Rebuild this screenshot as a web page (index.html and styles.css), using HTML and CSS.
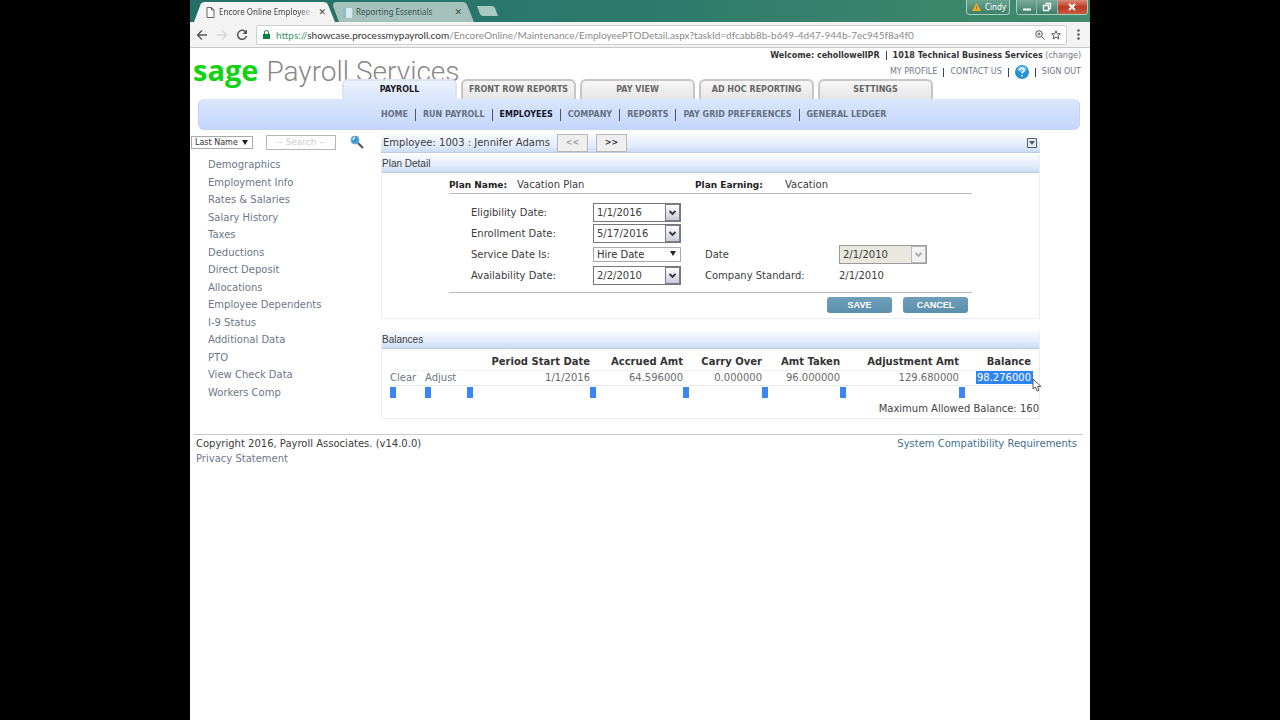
FILE: index.html
```html
<!DOCTYPE html>
<html lang="en">
<head>
<meta charset="utf-8">
<title>Encore Online Employee</title>
<link rel="stylesheet" href="styles.css">
</head>
<body>
<div class="window">
  <div class="titlebar">
    <div class="browser-tab current">
      <svg class="tab-shape" viewBox="0 0 144 20" preserveAspectRatio="none"><path d="M0 20 L6 4 Q7 0 11 0 H130 Q134 0 135 3 L142 20Z" fill="#f3f3f3"/></svg>
      <svg class="file-icon" width="9" height="11" viewBox="0 0 9 11"><path d="M1 .5h4.500L8 3v7.500H1zM5.500 .5V3H8" fill="#fff" stroke="#666"/></svg>
      <span class="tab-title fade">Encore Online Employee</span>
      <button class="tab-close" aria-label="Close tab">✕</button>
    </div>
    <div class="browser-tab">
      <svg class="tab-shape" viewBox="0 0 144 20" preserveAspectRatio="none"><path d="M6 20 L0 4 Q0 0 3 0 H130 Q134 0 135 3 L142 20Z" fill="#a5c1bb"/></svg>
      <svg class="file-icon" width="9" height="11" viewBox="0 0 9 11"><path d="M0 1h9v10H0z" fill="#d7e8ec"/><path d="M0 1h3v10H0z" fill="#8dbccb"/></svg>
      <span class="tab-title">Reporting Essentials</span>
      <button class="tab-close" aria-label="Close tab">✕</button>
    </div>
    <button class="new-tab" aria-label="New tab"><svg width="22" height="12" viewBox="0 0 22 12"><path d="M1 1h15q2 0 3 2l3 8H7q-2 0-3-2z" fill="#a9c8bf"/></svg></button>
    <div class="window-buttons">
      <button class="profile"><svg width="9" height="8" viewBox="0 0 9 8"><path d="M4.500 0L9 8H0z" fill="#f0a928"/><path d="M4.500 3v3" stroke="#a56d12"/></svg>Cindy</button>
      <div class="controls">
        <button aria-label="Minimize"><svg width="10" height="10" viewBox="0 0 10 10"><path d="M1 7.500h8" stroke="#fff" stroke-width="2"/></svg></button>
        <button aria-label="Restore"><svg width="10" height="10" viewBox="0 0 10 10"><path d="M3.500 1.500h5v5h-2M1.500 3.500h5v5h-5z" fill="none" stroke="#fff" stroke-width="1.300"/></svg></button>
        <button class="quit" aria-label="Close"><svg width="10" height="10" viewBox="0 0 10 10"><path d="M2 2l6 6M8 2l-6 6" stroke="#fff" stroke-width="2"/></svg></button>
      </div>
    </div>
  </div>
  <div class="toolbar">
    <button aria-label="Back"><svg width="12" height="12" viewBox="0 0 12 12"><path d="M11 6H2M6 1.500L1.500 6 6 10.500" fill="none" stroke="#555" stroke-width="1.400"/></svg></button>
    <button aria-label="Forward"><svg width="12" height="12" viewBox="0 0 12 12"><path d="M1 6h9M6 1.500L10.500 6 6 10.500" fill="none" stroke="#d5d5d5" stroke-width="1.400"/></svg></button>
    <button aria-label="Reload"><svg width="12" height="12" viewBox="0 0 12 12"><path d="M10 3.500A4.500 4.500 0 1 0 10.500 7" fill="none" stroke="#555" stroke-width="1.500"/><path d="M11 .5v4.500H6.500z" fill="#555"/></svg></button>
    <div class="address">
      <svg width="7" height="9" viewBox="0 0 7 9"><path d="M0 4h7v5H0z" fill="#0b8043"/><path d="M1.500 4V2.500a2 2 0 0 1 4 0V4" fill="none" stroke="#0b8043"/></svg>
      <span class="url"><span class="secure">https://</span><b>showcase.processmypayroll.com</b>/EncoreOnline/Maintenance/EmployeePTODetail.aspx?taskId=dfcabb8b-b649-4d47-944b-7ec945f8a4f0</span>
      <svg width="10" height="10" viewBox="0 0 10 10"><circle cx="4" cy="4" r="3.300" fill="none" stroke="#555"/><path d="M6.500 6.500L9.500 9.500M2.500 4h3M4 2.500v3" stroke="#555"/></svg>
      <svg width="10" height="10" viewBox="0 0 10 10"><path d="M5 .8l1.200 3h3.200L6.900 5.800l1 3.200L5 7.100 2.100 9l1-3.200L.6 3.800h3.200z" fill="none" stroke="#555"/></svg>
    </div>
    <button class="menu" aria-label="Menu"><svg width="3" height="11" viewBox="0 0 3 11"><circle cx="1.500" cy="1.500" r="1.200" fill="#555"/><circle cx="1.500" cy="5.500" r="1.200" fill="#555"/><circle cx="1.500" cy="9.500" r="1.200" fill="#555"/></svg></button>
  </div>

  <header class="masthead">
    <div class="logo"><span class="sage">sage</span><span class="product">Payroll Services</span></div>
    <div class="account">
      <div class="welcome"><b>Welcome: cehollowellPR</b><i></i><b>1018 Technical Business Services</b> <a href="#">(change)</a></div>
      <div class="account-links"><a href="#">MY PROFILE</a><i></i><a href="#">CONTACT US</a><i></i>
        <a href="#" aria-label="Help"><svg width="14" height="14" viewBox="0 0 14 14"><circle cx="7" cy="7" r="7" fill="#2491d4"/><ellipse cx="7" cy="4" rx="5" ry="3" fill="#66bfea"/><path d="M4.800 5.300Q5 3.300 7 3.300t2.200 1.900Q9.200 6.300 7.900 7 7 7.500 7 8.500M7 10v1.500" fill="none" stroke="#fff" stroke-width="1.500"/></svg></a>
        <i></i><a href="#">SIGN OUT</a></div>
    </div>
  </header>
  <nav class="tabs">
    <a class="active" href="#">PAYROLL</a><a href="#">FRONT ROW REPORTS</a><a href="#">PAY VIEW</a><a href="#">AD HOC REPORTING</a><a href="#">SETTINGS</a>
  </nav>
  <nav class="subnav">
    <a href="#">HOME</a><a href="#">RUN PAYROLL</a><a class="active" href="#">EMPLOYEES</a><a href="#">COMPANY</a><a href="#">REPORTS</a><a href="#">PAY GRID PREFERENCES</a><a href="#">GENERAL LEDGER</a>
  </nav>

  <div class="body">
    <aside class="sidebar">
      <form class="search">
        <div class="picker"><select aria-label="Search by"><option>Last Name</option></select></div>
        <input type="text" placeholder="-- Search --" aria-label="Search">
        <button type="button" aria-label="Find"><svg width="14" height="14" viewBox="0 0 14 14"><path d="M8 8l5 5" stroke="#53606f" stroke-width="2.400"/><circle cx="5" cy="5" r="4" fill="#3b9add" stroke="#7fa9c8"/><path d="M3 5Q3 3 5 2.500" stroke="#dff3ff" stroke-width="1.500" fill="none"/></svg></button>
      </form>
      <ul class="links">
        <li><a href="#">Demographics</a></li><li><a href="#">Employment Info</a></li><li><a href="#">Rates &amp; Salaries</a></li><li><a href="#">Salary History</a></li><li><a href="#">Taxes</a></li><li><a href="#">Deductions</a></li><li><a href="#">Direct Deposit</a></li><li><a href="#">Allocations</a></li><li><a href="#">Employee Dependents</a></li><li><a href="#">I-9 Status</a></li><li><a href="#">Additional Data</a></li><li><a href="#">PTO</a></li><li><a href="#">View Check Data</a></li><li><a href="#">Workers Comp</a></li>
      </ul>
    </aside>
    <main class="content">
      <div class="bar employee">
        <span class="name">Employee: 1003 : Jennifer Adams</span>
        <button class="step" disabled>&lt;&lt;</button>
        <button class="step">&gt;&gt;</button>
        <button class="collapse" aria-label="Collapse"><svg width="10" height="10" viewBox="0 0 10 10"><path d="M.5 .5h9v9h-9z" fill="#e9effa" stroke="#555a66"/><path d="M2 3h6L5 7z" fill="#555a66"/></svg></button>
      </div>
      <section class="panel">
        <h2 class="bar">Plan Detail</h2>
        <form class="plan">
          <div class="plan-head"><b>Plan Name:</b><span>Vacation Plan</span><b>Plan Earning:</b><span>Vacation</span></div>
          <div class="fields">
            <label for="elig">Eligibility Date:</label>
            <div class="combo wide"><input id="elig" type="text" value="1/1/2016"><button type="button" aria-label="Open calendar"><svg width="7" height="6" viewBox="0 0 7 6"><path d="M.5 1l3 3 3-3" fill="none" stroke="#333" stroke-width="1.800"/></svg></button></div>
            <label for="enroll">Enrollment Date:</label>
            <div class="combo wide"><input id="enroll" type="text" value="5/17/2016"><button type="button" aria-label="Open calendar"><svg width="7" height="6" viewBox="0 0 7 6"><path d="M.5 1l3 3 3-3" fill="none" stroke="#333" stroke-width="1.800"/></svg></button></div>
            <label for="service">Service Date Is:</label>
            <div class="picker hire"><select id="service"><option>Hire Date</option></select></div>
            <label for="date">Date</label>
            <div class="combo off"><input id="date" type="text" value="2/1/2010" disabled><button type="button" aria-label="Open calendar" disabled><svg width="7" height="6" viewBox="0 0 7 6"><path d="M.5 1l3 3 3-3" fill="none" stroke="#aaa" stroke-width="1.800"/></svg></button></div>
            <label for="avail">Availability Date:</label>
            <div class="combo"><input id="avail" type="text" value="2/2/2010"><button type="button" aria-label="Open calendar"><svg width="7" height="6" viewBox="0 0 7 6"><path d="M.5 1l3 3 3-3" fill="none" stroke="#333" stroke-width="1.800"/></svg></button></div>
            <span>Company Standard:</span><span>2/1/2010</span>
          </div>
          <div class="actions"><button type="button">SAVE</button><button type="button">CANCEL</button></div>
        </form>
      </section>
      <section class="panel balances">
        <h2 class="bar">Balances</h2>
        <table>
          <colgroup><col class="c-clear"><col class="c-adjust"><col><col class="c-accrued"><col class="c-carry"><col class="c-taken"><col class="c-adjustment"><col class="c-balance"></colgroup>
          <thead><tr><th></th><th></th><th>Period Start Date</th><th>Accrued Amt</th><th>Carry Over</th><th>Amt Taken</th><th>Adjustment Amt</th><th>Balance</th></tr></thead>
          <tbody>
            <tr><td><a href="#">Clear</a></td><td><a href="#">Adjust</a></td><td>1/1/2016</td><td>64.596000</td><td>0.000000</td><td>96.000000</td><td>129.680000</td><td class="picked"><span>98.276000</span><svg class="pointer" width="10" height="14" viewBox="0 0 10 14"><path d="M1 1v10l2.500-2 1.500 4 2-1-1.500-3.500H9z" fill="#fff" stroke="#555"/></svg></td></tr>
            <tr class="marks"><td><s></s></td><td><s></s></td><td><s></s></td><td><s></s></td><td><s></s></td><td><s></s></td><td><s></s></td><td><s></s></td></tr>
          </tbody>
        </table>
        <p class="max">Maximum Allowed Balance: 160</p>
      </section>
    </main>
  </div>
  <footer class="footer">
    <div>Copyright 2016, Payroll Associates. (v14.0.0)<br><a href="#">Privacy Statement</a></div>
    <a class="compat" href="#">System Compatibility Requirements</a>
  </footer>
</div>
</body>
</html>
```
FILE: styles.css
```css
* { box-sizing: border-box; }
body { margin: 0; background: #000; color: #3c3c3c; font: 10px/14px "DejaVu Sans", sans-serif; }
a { color: #6b7888; text-decoration: none; }
button { margin: 0; padding: 0; border: 0; background: none; font: inherit; color: inherit; }
input, select { font: inherit; color: inherit; }
svg { display: block; flex: none; }
.window { margin: 0 190px; min-height: 100vh; background: #fff; }

.titlebar { display: flex; height: 22px; padding: 2px 2px 0 4px; background: linear-gradient(90deg, #246f69, #2d7a6c 50%, #438b6b); }
.browser-tab { display: flex; align-items: center; position: relative; width: 143px; height: 20px; padding: 0 14px 0 10px; gap: 4px; margin-right: -4px; font: 8px/14px "Noto Sans", sans-serif; color: #39544f; }
.browser-tab.current { z-index: 1; padding: 0 11px 0 12px; color: #444; }
.tab-shape { position: absolute; top: 0; left: 0; width: 100%; height: 100%; }
.file-icon, .tab-title, .tab-close { position: relative; }
.tab-title { flex: 1; overflow: hidden; white-space: nowrap; }
.fade { -webkit-mask-image: linear-gradient(90deg, #000 85%, transparent); mask-image: linear-gradient(90deg, #000 85%, transparent); }
.tab-close { font: 9px/14px "DejaVu Sans", sans-serif; }
.new-tab { margin: 2px 0 0 4px; height: 14px; }
.window-buttons { display: flex; gap: 6px; margin: -2px 0 0 auto; color: #fff; }
.profile, .controls { display: flex; height: 15px; border: 1px solid #a8cfc0; border-top: 0; border-radius: 0 0 4px 4px; overflow: hidden; }
.profile { align-items: center; gap: 4px; width: 44px; padding-left: 5px; font: 8px/12px "Noto Sans", sans-serif; background: linear-gradient(#6ba48f, #3d7f68); }
.controls { width: 72px; }
.controls button { display: grid; place-items: center; flex: 2; border-right: 1px solid #8db8a8; background: linear-gradient(#79a999, #3d7f68); }
.controls .quit { flex: 3; border: 0; background: linear-gradient(#d98b78, #bc3a25 50%, #c85a3e); }

.toolbar { display: flex; align-items: center; gap: 8px; height: 26px; padding: 0 10px 0 6px; background: #f3f3f3; border-bottom: 1px solid #c9c9c9; }
.address { display: flex; flex: 1; align-items: center; gap: 6px; height: 20px; padding: 0 5px 0 6px; background: #fff; border: 1px solid #cfcfcf; border-radius: 2px; }
.toolbar .menu { margin-left: 2px; }
.url { flex: 1; overflow: hidden; white-space: nowrap; font: 10px/16px Lato, "Noto Sans", sans-serif; color: #8a8a8a; }
.url b { font-weight: 400; color: #333; }
.secure { color: #3c9863; }

.masthead { display: flex; justify-content: space-between; height: 31px; padding: 0 9px 0 3px; white-space: nowrap; }
.logo { display: flex; align-items: baseline; gap: 8px; height: 40px; padding-top: 2px; }
.sage { font: 700 29px/40px "Open Sans", sans-serif; color: #12d212; }
.product { font: 300 28px/40px Roboto, "Open Sans", sans-serif; color: #888; }
.account { font-size: 8px; text-align: right; }
.account b { color: #333; }
.welcome { height: 15px; line-height: 15px; }
.account-links { display: flex; justify-content: flex-end; align-items: center; height: 16px; margin-top: 1px; }
.account i { display: inline-block; width: 1px; height: 9px; margin: 0 6px; background: #444; vertical-align: middle; }

.tabs { display: flex; position: relative; gap: 4px; padding-left: 152px; font: 700 8px/20px "DejaVu Sans", sans-serif; }
.tabs a { width: 115px; height: 20px; text-align: center; color: #666; border: solid #c6c6c6; border-width: 2px 2px 0; border-radius: 6px 6px 0 0; background: linear-gradient(#f6f6f6, #e6e6e6); line-height: 17px; }
.tabs .active { color: #1b1b2a; border-color: #dce4f4; background: linear-gradient(#edf2fc, #dae6fd); }
.subnav { display: flex; align-items: center; height: 31px; margin: 0 10px 0 8px; padding: 1px 0 0 175px; border: 1px solid #c4d3ee; border-top: 0; border-radius: 6px; background: linear-gradient(#dae6fd, #c4d6fb); font: 700 8px/12px "DejaVu Sans", sans-serif; white-space: nowrap; }
.subnav a { padding: 0 7px; color: #667080; }
.subnav a + a { border-left: 1px solid #555; }
.subnav .active { color: #14142a; }

.body { display: flex; padding-top: 4px; }
.sidebar { width: 191px; flex: none; }
.search { display: flex; align-items: center; height: 16px; padding-left: 1px; }
.picker { position: relative; width: 62px; font-size: 9px; }
.picker::after { content: ""; position: absolute; right: 5px; top: 4px; border: solid transparent; border-width: 5px 3px 0; border-top-color: #222; pointer-events: none; }
.picker select { display: block; appearance: none; width: 100%; height: 13px; padding: 0 3px; border: 1px solid #aaa; border-radius: 0; background: #fff; font-size: 8px; line-height: 11px; color: #333; }
.search input { width: 70px; height: 15px; margin: 0 14px 0 13px; padding: 0 2px; border: 1px solid #b5b5b5; text-align: center; font-size: 9px; }
.search input::placeholder { color: #ccc; }
.links { display: flex; flex-direction: column; justify-content: space-between; height: 245px; margin: 6px 0 0; padding: 0 0 0 18px; list-style: none; line-height: 17px; }

.content { flex: 1; min-width: 0; margin-right: 50px; }
.bar { height: 18px; margin: 0; font-weight: 400; line-height: 18px; background: linear-gradient(#f8faff, #e4edfc 60%, #cbdcf5); border-bottom: 1px solid #bccce2; }
h2.bar { font: 400 10px/17px "Liberation Sans", Arial, sans-serif; }
.employee { display: flex; align-items: center; height: 19px; padding: 0 3px 0 2px; margin-bottom: 2px; }
.step { width: 31px; height: 18px; border: 1px solid #b7b7b7; background: #eee; font: 700 8px/14px "DejaVu Sans", sans-serif; color: #333; }
.name + .step { margin: 0 8px 0 7px; }
.step:disabled { color: #999; }
.collapse { margin-left: auto; }
.panel { border: 1px solid #eaeef4; border-top: 0; }
.plan { margin: 0 67px; }
.plan-head { display: grid; grid-template-columns: 68px 178px 90px 1fr; height: 21px; line-height: 24px; border-bottom: 1px solid #bbb; }
.plan-head b { font-size: 9px; color: #222; }
.fields { display: grid; grid-template-columns: 122px 112px 134px 1fr; grid-auto-rows: 21px; align-items: center; padding: 8px 0 6px 22px; border-bottom: 1px solid #bbb; }
.wide { grid-column-end: span 3; }
.combo { display: flex; width: 88px; height: 19px; border: 1px solid #777; background: #fff; }
.combo input { flex: 1; min-width: 0; padding: 0 3px; border: 0; background: none; }
.combo button { display: grid; place-items: center; width: 15px; border: 1px solid #7b7b90; background: linear-gradient(#fff, #c9cbda); }
.off { border-color: #999; background: #e8e8df; }
.off button { border-color: #bbb; background: #f2f2f4; }
.picker.hire { width: 88px; }
.hire select { height: 15px; font-size: 10px; }
.actions { display: flex; justify-content: flex-end; gap: 11px; padding: 4px 4px 5px 0; }
.actions button { width: 65px; height: 16px; border-radius: 3px; background: linear-gradient(#6f9fba, #5a8fac); color: #fff; font: 700 9px/16px "Liberation Sans", Arial, sans-serif; }
.balances { margin-top: 12px; }
table { width: calc(100% - 14px); margin: 5px 6px 0 8px; border-collapse: collapse; table-layout: fixed; }
th, td { height: 16px; padding: 0; text-align: right; white-space: nowrap; line-height: 15px; }
th { color: #333; border-bottom: 1px solid #f0f2f6; }
td { color: #6a6a6a; border-bottom: 1px solid #e8ebf0; }
tbody td { height: 15px; line-height: 14px; }
td:nth-child(-n+2) { text-align: left; }
.c-clear { width: 35px; }
.c-adjust { width: 42px; }
.c-accrued { width: 93px; }
.c-carry { width: 79px; }
.c-taken { width: 78px; }
.c-adjustment { width: 119px; }
.c-balance { width: 74px; }
th:last-child { padding-right: 2px; }
.picked { position: relative; }
.picked span { display: block; margin-left: 17px; height: 13px; padding-right: 2px; line-height: 13px; background: #2f84f2; color: #fff; }
.pointer { position: absolute; right: -9px; top: 7px; }
.marks td { height: 14px; padding-top: 1px; border: 0; text-align: left; line-height: 0; }
.marks s { display: inline-block; width: 6px; height: 11px; background: #3b86f4; }
.max { margin: 0; height: 19px; line-height: 20px; text-align: right; color: #444; }
.footer { display: flex; justify-content: space-between; margin: 15px 7px 0 3px; padding: 1px 6px 0 3px; border-top: 1px solid #ccc; line-height: 15px; }
.compat { color: #43708f; }
```
